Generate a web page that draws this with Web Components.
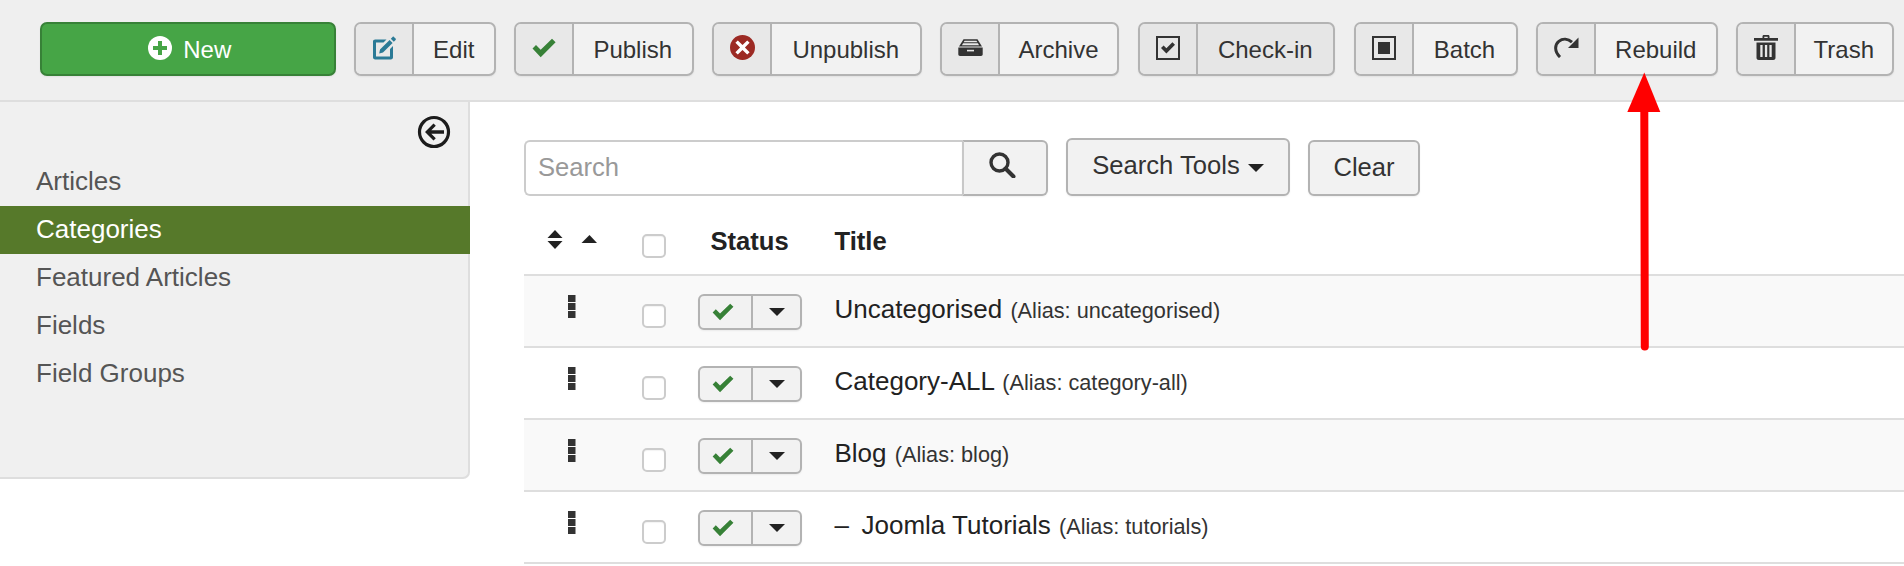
<!DOCTYPE html>
<html>
<head>
<meta charset="utf-8">
<title>Categories</title>
<style>
    html, body { margin: 0; padding: 0; background: #fff; overflow: hidden; }
    body { width: 1904px; height: 566px; position: relative; font-family: "Liberation Sans", Arial, sans-serif; color: #333; }
    .page-body { display: flex; align-items: flex-start; }
</style>
</head>
<body>
<tool-bar>
    <tool-button primary icon="new" w="295.5">New</tool-button>
    <tool-button icon="edit" w="141.5">Edit</tool-button>
    <tool-button icon="publish" w="179.5">Publish</tool-button>
    <tool-button icon="unpublish" w="209.5">Unpublish</tool-button>
    <tool-button icon="archive" w="179">Archive</tool-button>
    <tool-button icon="checkin" w="197.5" hovered>Check-in</tool-button>
    <tool-button icon="batch" w="164">Batch</tool-button>
    <tool-button icon="rebuild" w="181.5">Rebuild</tool-button>
    <tool-button icon="trash" w="157.5">Trash</tool-button>
</tool-bar>
<div class="page-body">
    <side-bar>
        <side-item>Articles</side-item>
        <side-item active>Categories</side-item>
        <side-item>Featured Articles</side-item>
        <side-item>Fields</side-item>
        <side-item>Field Groups</side-item>
    </side-bar>
    <main-panel>
        <filter-bar></filter-bar>
        <cat-head></cat-head>
        <cat-row striped alias="uncategorised">Uncategorised</cat-row>
        <cat-row alias="category-all">Category-ALL</cat-row>
        <cat-row striped alias="blog">Blog</cat-row>
        <cat-row level="1" alias="tutorials">Joomla Tutorials</cat-row>
    </main-panel>
</div>
<red-arrow></red-arrow>

<script>
const ICONS = {
    new: `<svg width="24" height="24" viewBox="0 0 24 24"><circle cx="12" cy="12" r="12" fill="#fff"/><path d="M10 5h4v5h5v4h-5v5h-4v-5H5v-4h5z" fill="#46a546"/></svg>`,
    edit: `<svg width="24" height="24" viewBox="0 0 24 24"><path d="M14.500 3.500H3.200C1.800 3.500 1 4.300 1 5.700v15.600C1 22.700 1.800 23.400 3.200 23.400h15.600c1.400 0 2.200-.7 2.200-2.100V10l-3 3v7.400H4V6.500h7.500z" fill="#2b7a96"/><path d="M8 13.600 17.600 4l3 3L11 16.600l-3.800.8zM18.800 2.800 20.600.9c.4-.4.9-.4 1.300 0l1.700 1.700c.4.4.4.9 0 1.300l-1.800 1.900z" fill="#2b7a96"/></svg>`,
    publish: `<svg width="24" height="20" viewBox="0 0 24 20"><path d="M0.500 10.500 4 7l4.700 4.700L20 .8l3.600 3.500L8.700 19.200z" fill="#378137"/></svg>`,
    unpublish: `<svg width="25" height="25" viewBox="0 0 25 25"><circle cx="12.500" cy="12.500" r="12.500" fill="#9c2a24"/><path d="M7.800 5.400l4.700 4.700 4.700-4.700 2.400 2.400-4.700 4.700 4.700 4.700-2.400 2.400-4.700-4.700-4.700 4.700-2.400-2.400 4.700-4.700-4.700-4.700z" fill="#fff"/></svg>`,
    archive: `<svg width="25" height="17" viewBox="0 0 25 17"><path d="M5.500.3h14L24 7.500H1z" fill="#333"/><path d="M6.600 1.700h11.800l1 1.500H5.600zM5.100 4.200h14.800l1.200 2H3.900z" fill="#e8e8e8"/><path d="M.3 8.600h24.400v6.600c0 1-.7 1.700-1.700 1.700H2c-1 0-1.700-.7-1.700-1.700z" fill="#333"/><rect x="9" y="10.800" width="7" height="1.600" fill="#e8e8e8"/></svg>`,
    checkin: `<svg width="24" height="24" viewBox="0 0 24 24"><rect x="1" y="1" width="22" height="22" fill="none" stroke="#333" stroke-width="2"/><path d="M5 12l2.600-2.600 2.800 2.800 6-6L19 8.800l-8.600 8.600z" fill="#333"/></svg>`,
    batch: `<svg width="24" height="24" viewBox="0 0 24 24"><rect x="1" y="1" width="22" height="22" fill="none" stroke="#333" stroke-width="2"/><rect x="6" y="6" width="12" height="12" fill="#333"/></svg>`,
    rebuild: `<svg width="25" height="21" viewBox="0 0 25 21"><path d="M6 20C0 14.500 .8 7.500 4.800 4.300 8.800 1.200 14 1.600 18 5.200" fill="none" stroke="#333" stroke-width="3"/><path d="M24.500 .6v10.400H14z" fill="#333"/></svg>`,
    trash: `<svg width="24" height="25" viewBox="0 0 24 25"><path d="M8.500 3V1.300C8.500.6 9.100 0 9.800 0h4.400c.7 0 1.300.6 1.300 1.300V3H24v2.800H0V3zM10.300 3h3.400V1.700h-3.400z" fill="#333"/><path d="M2.500 7.500h19v15.200c0 1.300-1 2.300-2.300 2.300H4.800c-1.300 0-2.300-1-2.300-2.300z" fill="#333"/><path d="M6.300 10h2.300v12H6.300zM10.900 10h2.300v12h-2.300zM15.400 10h2.300v12h-2.300z" fill="#e8e8e8"/></svg>`,
    search: `<svg width="27" height="26" viewBox="0 0 27 26"><circle cx="10.500" cy="10.500" r="8.500" fill="none" stroke="#333" stroke-width="3.400"/><path d="M16.500 16.500l8 8" stroke="#333" stroke-width="4" stroke-linecap="round"/></svg>`,
    back: `<svg width="34" height="34" viewBox="0 0 34 34"><circle cx="17" cy="17" r="14.500" fill="none" stroke="#1c1c1c" stroke-width="3.200"/><path d="M16.500 8.500l2.300 2.300-4.500 4.400H27v3.600H14.300l4.500 4.400-2.300 2.300L8 17z" fill="#1c1c1c"/></svg>`
};

class ToolBar extends HTMLElement {
    constructor() {
        super();
        this.attachShadow({mode: 'open'});
    }
    connectedCallback() {
        this.shadowRoot.innerHTML = `
        <style>
            :host { display: flex; gap: 18.5px; box-sizing: border-box; height: 102px; padding: 22px 0 0 40px;
                background: #efefef; border-bottom: 2px solid #dedede; }
        </style>
        <slot></slot>`;
    }
}

class ToolButton extends HTMLElement {
    constructor() {
        super();
        this.attachShadow({mode: 'open'});
    }
    connectedCallback() {
        const icon = ICONS[this.getAttribute('icon')];
        const w = this.getAttribute('w');
        this.shadowRoot.innerHTML = `
        <style>
            :host { display: flex; box-sizing: border-box; width: ${w}px; height: 54px; flex: none;
                border: 2px solid #b3b3b3; border-radius: 7px; overflow: hidden;
                background: #f2f2f2; color: #333; font-size: 24px; box-shadow: 0 1px 2px rgba(0,0,0,.06); }
            .ico { display: flex; align-items: center; justify-content: center; width: 56px; flex: none;
                background: #e8e8e8; border-right: 2px solid #b3b3b3; padding-bottom: 3px; }
            .lbl { flex: 1; text-align: center; line-height: 51px; }
            :host([hovered]) { background: #e6e6e6; }
            :host([hovered]) .ico { background: #e6e6e6; }
            :host([primary]) { background: #46a546; border-color: #378137; color: #fff; justify-content: center; gap: 11px; padding-left: 4px; }
            :host([primary]) .ico { background: none; border: 0; width: 24px; padding-bottom: 3px; }
            :host([primary]) .lbl { flex: none; }
        </style>
        <span class="ico">${icon}</span><span class="lbl"><slot></slot></span>`;
    }
}

class SideBar extends HTMLElement {
    constructor() {
        super();
        this.attachShadow({mode: 'open'});
    }
    connectedCallback() {
        this.shadowRoot.innerHTML = `
        <style>
            :host { display: block; box-sizing: border-box; width: 470px; height: 377px; flex: none;
                background: #f0f0f0; border-right: 2px solid #dedede; border-bottom: 2px solid #dedede;
                border-bottom-right-radius: 7px; }
            .top { display: flex; justify-content: flex-end; height: 56px; padding: 13px 17px 0 0; box-sizing: border-box; }
        </style>
        <div class="top">${ICONS.back}</div>
        <slot></slot>`;
    }
}

class SideItem extends HTMLElement {
    constructor() {
        super();
        this.attachShadow({mode: 'open'});
        this.shadowRoot.innerHTML = `
        <style>
            :host { display: block; height: 48px; line-height: 46px; padding-left: 36px;
                font-size: 26px; color: #555; }
            :host([active]) { background: #56792a; color: #fff; margin-right: -2px; }
        </style>
        <slot></slot>`;
    }
}

class MainPanel extends HTMLElement {
    constructor() {
        super();
        this.attachShadow({mode: 'open'});
        this.shadowRoot.innerHTML = `
        <style>
            :host { display: block; flex: 1; min-width: 0; padding: 36px 0 0 54px; }
        </style>
        <slot></slot>`;
    }
}

class FilterBar extends HTMLElement {
    constructor() {
        super();
        this.attachShadow({mode: 'open'});
        this.shadowRoot.innerHTML = `
        <style>
            :host { display: flex; align-items: flex-end; height: 58px; font-size: 25.6px; color: #333; }
            .input { display: flex; align-items: center; box-sizing: border-box; width: 438px; height: 56px; padding: 0 0 2px 12px;
                background: #fff; border: 2px solid #ccc; border-right: 0; border-radius: 6px 0 0 6px; color: #999; }
            .btn { display: flex; align-items: center; justify-content: center; box-sizing: border-box; height: 56px;
                background: #f2f2f2; border: 2px solid #b3b3b3; border-radius: 6px; box-shadow: 0 1px 2px rgba(0,0,0,.06); }
            .go { width: 86px; border-radius: 0 6px 6px 0; padding: 0 6px 6px 0; border-left-color: #c8c8c8; }
            .tools { width: 224px; height: 58px; margin-left: 18px; gap: 8px; padding-bottom: 4px; }
            .clear { width: 112px; margin-left: 18px; padding-bottom: 2px; }
            .caret { width: 0; height: 0; border: 8px solid transparent; border-top-color: #222; border-bottom: 0; margin-top: 6px; }
        </style>
        <div class="input">Search</div>
        <div class="btn go">${ICONS.search}</div>
        <div class="btn tools">Search Tools<span class="caret"></span></div>
        <div class="btn clear">Clear</div>`;
    }
}

const COLUMNS = 'grid-template-columns: 118px 56px 136.5px 1fr;';

class CheckBox extends HTMLElement {
    constructor() {
        super();
        this.attachShadow({mode: 'open'});
        this.shadowRoot.innerHTML = `
        <style>
            :host { display: block; box-sizing: border-box; width: 24px; height: 24px; background: #fff;
                border: 2px solid #ccc; border-radius: 5px; box-shadow: inset 0 1px 1px rgba(0,0,0,.05); }
        </style>`;
    }
}

class CatHead extends HTMLElement {
    constructor() {
        super();
        this.attachShadow({mode: 'open'});
        this.shadowRoot.innerHTML = `
        <style>
            :host { display: grid; ${COLUMNS} box-sizing: border-box; height: 80px; border-bottom: 2px solid #dedede;
                font-size: 25.6px; font-weight: bold; color: #222; }
            svg { display: block; margin: 34px 0 0 23px; }
            check-box { margin-top: 38px; }
            .status { padding: 30px 0 0 12.5px; line-height: 30px; }
            .title { line-height: 30px; padding-top: 30px; }
        </style>
        <svg width="52" height="19" viewBox="0 0 52 19"><path d="M8 0l7.500 8H.5zM8 19L.5 11h15zM42.500 5l7.500 8H34.500z" fill="#222"/></svg>
        <check-box></check-box>
        <div class="status">Status</div>
        <div class="title">Title</div>`;
    }
}

class CatRow extends HTMLElement {
    constructor() {
        super();
        this.attachShadow({mode: 'open'});
    }
    connectedCallback() {
        const dash = this.getAttribute('level') ? '<span class="dash">–</span>' : '';
        this.shadowRoot.innerHTML = `
        <style>
            :host { display: grid; ${COLUMNS} box-sizing: border-box; height: 72px; border-bottom: 2px solid #dedede;
                font-size: 26px; color: #222; background: #fff; }
            :host([striped]) { background: #f9f9f9; }
            .handle { display: block; margin: 19px 0 0 44px; }
            check-box { margin-top: 28px; }
            .state { display: flex; box-sizing: border-box; width: 104px; height: 36px; margin-top: 18px; border: 2px solid #b3b3b3;
                border-radius: 6px; overflow: hidden; background: #f2f2f2; box-shadow: 0 1px 2px rgba(0,0,0,.06); }
            .state span { display: flex; align-items: center; justify-content: center; }
            .ok { width: 53px; border-right: 2px solid #b3b3b3; padding-right: 6px; box-sizing: border-box; }
            .more { flex: 1; }
            .title { padding-top: 18px; line-height: 30px; white-space: nowrap; }
            .dash { display: inline-block; width: 27px; }
            small { font-size: 21.7px; margin-left: 1px; color: #333; }
        </style>
        <svg class="handle" width="8" height="23" viewBox="0 0 8 23"><path d="M0 0h7.500v7H0zM0 8h7.500v7H0zM0 16h7.500v7H0z" fill="#333"/></svg>
        <check-box></check-box>
        <div class="state">
            <span class="ok"><svg width="22" height="18" viewBox="0 0 24 20"><path d="M0.500 10.500 4 7l4.700 4.700L20 .8l3.600 3.500L8.700 19.200z" fill="#378137"/></svg></span>
            <span class="more"><svg width="16" height="8" viewBox="0 0 16 8"><path d="M0 0h16L8 8z" fill="#222"/></svg></span>
        </div>
        <div class="title">${dash}<slot></slot> <small>(Alias: ${this.getAttribute('alias')})</small></div>`;
    }
}

// annotation drawn over the screenshot, so it sits on top of everything
class RedArrow extends HTMLElement {
    constructor() {
        super();
        this.attachShadow({mode: 'open'});
        this.shadowRoot.innerHTML = `
        <style>
            :host { position: absolute; left: 1627px; top: 72px; width: 34px; height: 280px; }
            svg { display: block; }
        </style>
        <svg width="34" height="280" viewBox="0 0 34 280"><path d="M17.300 .5 33.300 40H.3z" fill="#f00"/><path d="M17.300 38 17.800 274.500" stroke="#f00" stroke-width="8" stroke-linecap="round"/></svg>`;
    }
}

customElements.define('tool-bar', ToolBar);
customElements.define('tool-button', ToolButton);
customElements.define('side-bar', SideBar);
customElements.define('side-item', SideItem);
customElements.define('main-panel', MainPanel);
customElements.define('filter-bar', FilterBar);
customElements.define('check-box', CheckBox);
customElements.define('cat-head', CatHead);
customElements.define('cat-row', CatRow);
customElements.define('red-arrow', RedArrow);
</script>
</body>
</html>
